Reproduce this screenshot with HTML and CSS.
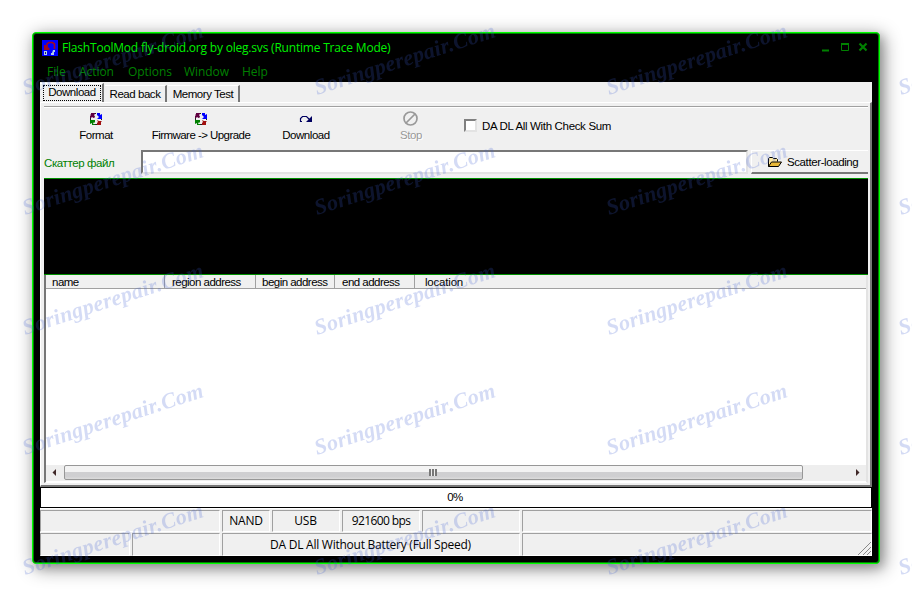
FILE: index.html
```html
<!DOCTYPE html>
<html lang="ru">
<head>
<meta charset="utf-8">
<title>FlashToolMod</title>
<link rel="stylesheet" href="styles.css">
</head>
<body>
<main class="window">
  <header class="titlebar">
    <svg class="app-icon" width="16" height="16" viewBox="0 0 16 16"><rect width="16" height="16" fill="#00f"/><path d="M5 7V4l2-1.500h3.500L12.500 4v5" fill="none" stroke="#a00a20" stroke-width="1.600"/><path d="M2 5h2l4 4-1 1H2z" fill="#a00a20"/><path d="M2 11h3v4H2zM11 10h2v2h-1v3H9v-2h1z" fill="#b5d0e4"/><path d="M3 12h1v2H3z" fill="#226"/></svg>
    <span class="title">FlashToolMod fly-droid.org by oleg.svs (Runtime Trace Mode)</span>
    <svg class="controls" width="48" height="12" viewBox="0 0 48 12" fill="none" stroke="#008000"><path d="M0 8.500h7" stroke-width="2"/><path d="M19.500 2v6.500h7V2"/><path d="M19 2h8" stroke-width="2"/><path d="m37.500 1.500 7 7m0-7-7 7" stroke-width="2.200"/></svg>
  </header>
  <nav class="menu"><span class="m1">File</span><span class="m2">Action</span><span class="m3">Options</span><span class="m4">Window</span><span class="m5">Help</span></nav>
  <section class="client">
    <div class="tabs"><div class="tab active"><span class="focus">Download</span></div><div class="tab tab-read">Read back</div><div class="tab tab-memory">Memory Test</div></div>
    <div class="page">
      <div class="toolbar">
        <div class="tool format"><svg width="14" height="14" viewBox="0 0 14 14"><use href="#cycle"/></svg><span>Format</span></div>
        <div class="tool upgrade"><svg width="14" height="14" viewBox="0 0 14 14"><use href="#cycle"/></svg><span class="t-upgrade">Firmware -&gt; Upgrade</span></div>
        <div class="tool download"><svg width="14" height="14" viewBox="0 0 14 14"><path d="M3 9.500H1.500v-3l2-2h4l3 3" fill="none" stroke="#000060" stroke-width="1.200"/><path d="M13 4v6H7z" fill="#000060"/></svg><span>Download</span></div>
        <div class="tool stop"><svg width="16" height="16" viewBox="0 0 16 16" fill="none" stroke="#999" stroke-width="1.700"><circle cx="7.500" cy="7.500" r="6.500"/><path d="m3 12 9-9"/></svg><span>Stop</span></div>
        <div class="check"><i class="box"></i><span class="t-check">DA DL All With Check Sum</span></div>
      </div>
      <div class="file-row"><span class="file-label">Скаттер файл</span><div class="input"></div><div class="button"><svg width="16" height="12" viewBox="0 0 16 12"><path d="M1.500 10.500v-8l1-1h3l1 1h3l1 1v2" fill="#ffe9a0" stroke="#000"/><path d="m1.500 10.500 3-4.500h10l-3 4.500z" fill="#e8b838" stroke="#000"/></svg><span>Scatter-loading</span></div></div>
      <div class="black"></div>
      <div class="list">
        <div class="head"><span>name</span><span>region address</span><span>begin address</span><span>end address</span><span class="loc">location</span></div>
        <div class="rows"></div>
        <div class="scroll"><svg width="18" height="14" viewBox="0 0 18 14"><path d="M10 4v7L6.500 7.500z" fill="#402828"/></svg><div class="thumb"><i class="grip"></i></div><svg class="right-arrow" width="18" height="14" viewBox="0 0 18 14"><path d="M8 4v7l3.500-3.500z" fill="#402828"/></svg></div>
      </div>
    </div>
    <div class="progress">0%</div>
    <footer class="status">
      <div class="row row1"><span></span><span>NAND</span><span>USB</span><span>921600 bps</span><span></span><span></span></div>
      <div class="row row2"><span></span><span></span><span>DA DL All Without Battery (Full Speed)</span><span class="last"><svg width="14" height="14" viewBox="0 0 14 14" stroke="#888" shape-rendering="crispEdges"><path d="M1 14 14 1M6 14l8-8M10 14l4-4"/></svg></span></div>
    </footer>
  </section>
</main>
<svg class="watermark" width="912" height="596">
  <defs>
    <g id="cycle" fill="none"><path d="M5 1.500h2M1.500 6v2M12.500 6v2M6 12.500h2" stroke="#222"/><path d="M2 2l3 3" stroke="#600040" stroke-width="2"/><path d="M2 1h4v1L5 3l1 2-1 1-2-1-1 1H1V4l1-1z" fill="#600040"/><path d="M8 1h3v2l2-1v5H8l2-2-2-2z" fill="#00f"/><path d="M1 8h5v3l-1-1-1 2h2v1H3V11l-2 1z" fill="#008000"/><path d="M8 8l2 1h3l-1 1v3H8v-2l1-1z" fill="#a01010"/></g>
    <pattern id="mark" width="292" height="120" patternUnits="userSpaceOnUse" patternTransform="translate(23 -23)"><text class="mark" transform="translate(2 118) rotate(-18)" textLength="189">Soringperepair.Com</text></pattern>
  </defs>
  <rect width="912" height="596" fill="url(#mark)"/>
</svg>
</body>
</html>
```
FILE: styles.css
```css
* { box-sizing: border-box; }
html, body { margin: 0; width: 912px; height: 596px; overflow: hidden; background: #fff; }
body { position: relative; padding: 32px; font: 11.5px/14px "Liberation Sans", sans-serif; letter-spacing: -.45px; color: #000; }
.window { width: 848px; height: 532px; background: #000; border: 1px solid #0f0; border-radius: 4px; padding: 1px 7px 7px; box-shadow: inset 0 0 0 1px #008000, 3px 4px 18px 1px rgba(0,0,0,.42), 3px 4px 8px rgba(0,0,0,.15); white-space: nowrap; }
svg { display: block; flex: none; }
.titlebar { height: 28px; display: flex; align-items: center; padding: 0 2px; font: 12px/16px "Open Sans", sans-serif; letter-spacing: -.2px; color: #00f000; }
.title { margin-left: 4px; flex: 1; }
.menu { display: flex; height: 20px; padding-left: 7px; font: 12px/19px "Open Sans", sans-serif; letter-spacing: -.05px; color: #008000; }
.m1 { width: 32px; } .m2 { width: 49px; } .m3 { width: 56px; } .m4 { width: 58px; }
.client { height: 474px; background: #f0f0f0; display: flex; flex-direction: column; }
.tabs { height: 20px; display: flex; align-items: flex-end; }
.tab { height: 17px; border-top: 1px solid #fff; border-right: 2px solid #777; text-align: center; line-height: 17px; }
.active { width: 64px; height: 19px; padding: 1px 0 0 3px; border-color: #fff #777 #fff #fff; }
.focus { display: block; width: 58px; height: 16px; border: 1px dotted #000; line-height: 13px; }
.tab-read { width: 62px; margin-left: 1px; }
.tab-memory { width: 72px; margin-left: 1px; }
.page { height: 385px; border-top: 1px solid #fff; border-left: 1px solid #fff; border-right: 2px solid #777; border-bottom: 2px solid #777; padding: 3px 2px 3px 3px; }
.toolbar { height: 44px; display: flex; border-top: 1px solid #a0a0a0; box-shadow: inset 0 1px #fff; padding-top: 5px; }
.tool { display: flex; flex-direction: column; align-items: center; height: 30px; justify-content: space-between; }
.format { width: 104px; } .upgrade { width: 106px; } .download { width: 104px; } .stop { width: 106px; color: #999; text-shadow: 1px 1px #fff; }
.stop svg { margin-top: -1px; }
.t-upgrade { letter-spacing: -.55px; }
.t-check { letter-spacing: -.33px; }
.check { display: flex; align-items: center; height: 27px; gap: 5px; }
.box { width: 13px; height: 13px; background: #fff; border: 2px solid; border-color: #808080 #e3e3e3 #e3e3e3 #808080; }
.file-row { height: 28px; display: flex; }
.file-label { width: 97px; line-height: 26px; letter-spacing: -.4px; color: #008000; }
.input { width: 607px; height: 24px; background: #fff; border: 2px solid; border-color: #777 #e3e3e3 #e3e3e3 #777; }
.button { width: 117px; height: 24px; margin-left: 3px; display: flex; align-items: center; gap: 4px; padding-left: 15px; border-top: 1px solid #fff; border-left: 1px solid #fff; border-bottom: 2px solid #777; letter-spacing: -.4px; }
.black { height: 97px; background: #000; border-top: 1px solid #009000; border-bottom: 1px solid #009000; }
.list { height: 208px; border-left: 2px solid #777; border-right: 2px solid #e3e3e3; border-bottom: 1px solid #fff; background: #fff; }
.head { height: 14px; background: #f0f0f0; border-bottom: 1px solid #a0a0a0; display: grid; grid-template-columns: 119px 91px 79px 80px 1fr; line-height: 14px; letter-spacing: -.52px; }
.head span { border-right: 1px solid #a0a0a0; padding-left: 7px; }
.head span:first-child { padding-left: 6px; }
.head span:nth-child(3) { padding-left: 6px; }
.head .loc { border: 0; padding-left: 10px; letter-spacing: -.2px; }
.rows { height: 176px; }
.scroll { height: 16px; display: flex; background: #eee; }
.thumb { width: 739px; height: 15px; border: 1px solid #979797; border-radius: 2px; background: linear-gradient(#f3f3f3 0 45%, #cfcfd1 50% 80%, #dcdcdc); display: flex; justify-content: center; align-items: center; padding-right: 2px; }
.grip { width: 8px; height: 7px; background: repeating-linear-gradient(90deg, #777 0 2px, #eee 2px 3px); }
.right-arrow { margin-left: auto; }
.progress { height: 21px; border: 1px solid #000; background: #fff; text-align: center; line-height: 19px; padding-right: 2px; }
.status { border-top: 1px solid #fff; padding-top: 1px; height: 48px; font: 12px/20px "Open Sans", sans-serif; letter-spacing: -.25px; }
.row { display: grid; column-gap: 2px; text-align: center; }
.row span { border: 1px solid; border-color: #a0a0a0 #fff #fff #a0a0a0; }
.row1 { height: 22px; grid-template-columns: 180px 48px 68px 78px 98px 1fr; }
.row1 span:nth-child(3) { padding-right: 1px; }
.row1 span:nth-child(4) { letter-spacing: -.6px; }
.row2 { height: 23px; margin-top: 1px; grid-template-columns: 90px 88px 298px 1fr; line-height: 21px; }
.row2 span:nth-child(3) { padding-right: 1px; }
.row .last { display: flex; justify-content: flex-end; align-items: flex-end; }
.watermark { position: absolute; inset: 0; }
.mark { font: italic bold 22px "Liberation Serif", serif; fill: rgba(60,90,210,.22); letter-spacing: 0; }
```
